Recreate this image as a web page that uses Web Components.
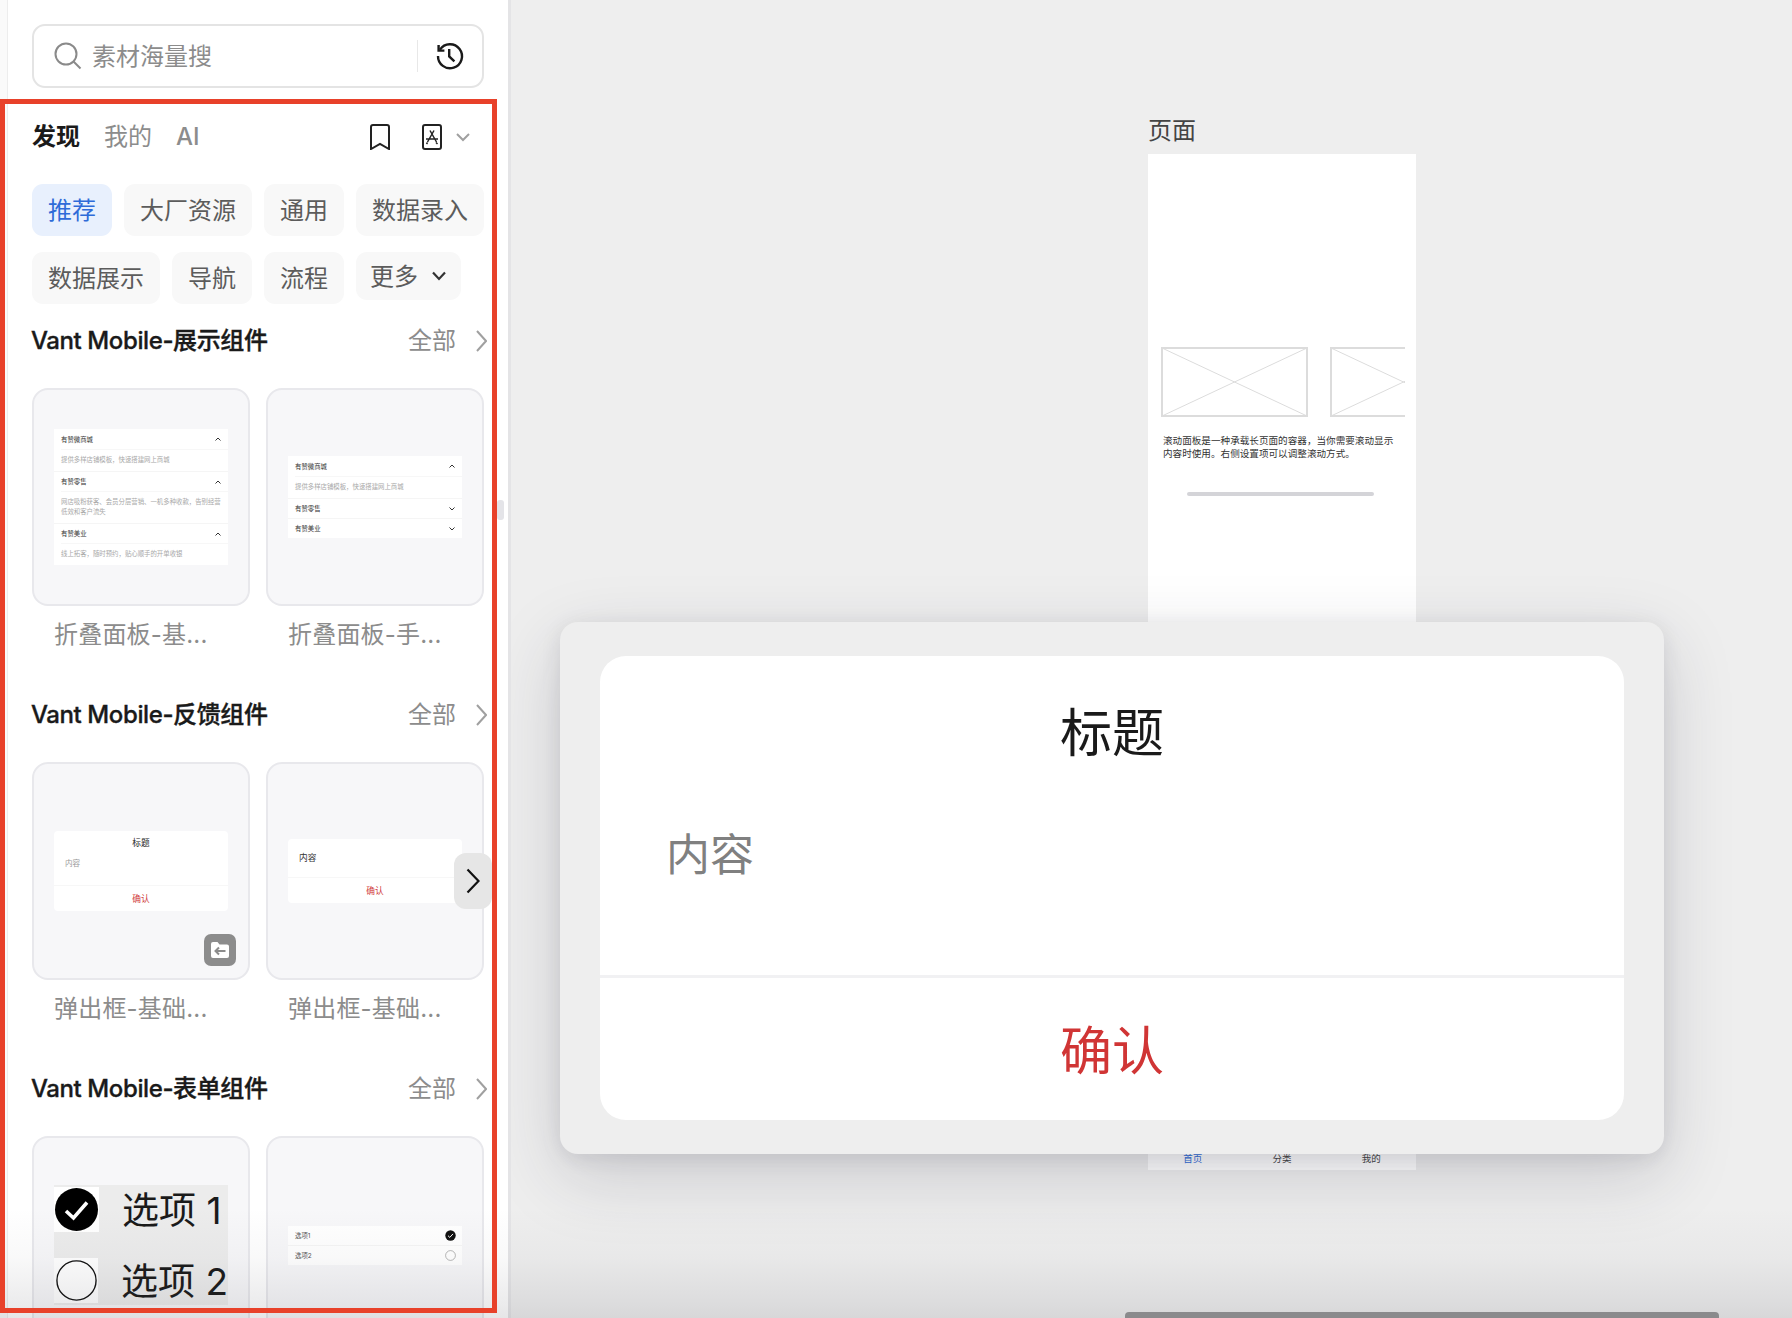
<!doctype html>
<html lang="zh-CN">
<head>
<meta charset="utf-8">
<title>素材</title>
<style>
  html, body {
    height: 1318px;
    margin: 0;
    overflow: hidden;
    width: 1792px;
  }

  body {
    color: #1a1a1a;
    font-family: Inter, 'Noto Sans CJK SC', sans-serif;
  }
</style>
</head>
<body>
<rs-app>
  <rs-sidebar slot="side">
    <rs-chip active>推荐</rs-chip>
    <rs-chip>大厂资源</rs-chip>
    <rs-chip>通用</rs-chip>
    <rs-chip>数据录入</rs-chip>
    <rs-chip>数据展示</rs-chip>
    <rs-chip>导航</rs-chip>
    <rs-chip>流程</rs-chip>
    <rs-chip more>更多</rs-chip>

    <rs-section slot="sections" label="Vant Mobile-展示组件">
      <rs-card caption="折叠面板-基...">
        <rs-collapse open="0,1,2"></rs-collapse>
      </rs-card>
      <rs-card caption="折叠面板-手...">
        <rs-collapse open="0"></rs-collapse>
      </rs-card>
    </rs-section>

    <rs-section slot="sections" label="Vant Mobile-反馈组件">
      <rs-card caption="弹出框-基础..." badge>
        <rs-dialog heading="标题"></rs-dialog>
      </rs-card>
      <rs-card caption="弹出框-基础...">
        <rs-dialog></rs-dialog>
      </rs-card>
      <rs-next slot="over"></rs-next>
    </rs-section>

    <rs-section slot="sections" label="Vant Mobile-表单组件">
      <rs-card caption="">
        <rs-options-big></rs-options-big>
      </rs-card>
      <rs-card caption="">
        <rs-options></rs-options>
      </rs-card>
    </rs-section>
  </rs-sidebar>

  <rs-canvas slot="main">
    <rs-page></rs-page>
    <rs-popup></rs-popup>
  </rs-canvas>
</rs-app>

<script>
class RSElement extends HTMLElement {
  render( html ) {
    const template = document.createElement( 'template' );
    template.innerHTML = html;

    this.attachShadow( {mode: 'open'} );
    this.shadowRoot.appendChild( template.content.cloneNode( true ) );
  }
}

class RSApp extends RSElement {
  constructor() {
    super();

    this.render( /* template */ `
      <style>
        :host {
          display: grid;
          grid-template-columns: 511px 1fr;
          height: 1318px;
          overflow: hidden;
          position: relative;
          width: 1792px;
        }

        div {
          background: linear-gradient( to bottom, rgba( 60, 60, 70, 0 ), rgba( 60, 60, 70, 0.03 ) 45%, rgba( 60, 60, 70, 0.1 ) 88%, rgba( 60, 60, 70, 0.13 ) );
          bottom: 0;
          height: 110px;
          left: 0;
          pointer-events: none;
          position: absolute;
          right: 0;
          z-index: 2;
        }
      </style>
      <slot name="side"></slot>
      <slot name="main"></slot>
      <div></div>
    ` );
  }
}

class RSSidebar extends RSElement {
  constructor() {
    super();

    this.render( /* template */ `
      <style>
        :host {
          background: #fafafa;
          border-right: solid 3px #e4e4e6;
          box-sizing: border-box;
          display: block;
          height: 1318px;
          overflow: hidden;
          padding-left: 7px;
          position: relative;
        }

        .inner {
          background: #ffffff;
          border-left: solid 1px #ededed;
          box-sizing: border-box;
          height: 100%;
          padding: 24px 24px 0 24px;
        }

        .chips {
          display: flex;
          flex-wrap: wrap;
          gap: 16px 12px;
          margin-top: 30px;
        }

        .sections {
          margin-top: 19px;
        }

        .frame {
          border: solid 5px #e8412a;
          box-sizing: border-box;
          height: 1214px;
          left: 0;
          pointer-events: none;
          position: absolute;
          top: 99px;
          width: 497px;
          z-index: 3;
        }

        .handle {
          background: #e4e4e8;
          border-radius: 3px;
          height: 20px;
          left: 497px;
          position: absolute;
          top: 500px;
          width: 7px;
        }
      </style>
      <div class="inner">
        <rs-search></rs-search>
        <rs-tabs></rs-tabs>
        <div class="chips"><slot></slot></div>
        <div class="sections"><slot name="sections"></slot></div>
      </div>
      <div class="handle"></div>
      <div class="frame"></div>
    ` );
  }
}

class RSSearch extends RSElement {
  constructor() {
    super();

    this.render( /* template */ `
      <style>
        :host {
          align-items: center;
          border: solid 2px #e4e4e4;
          border-radius: 13px;
          box-sizing: border-box;
          display: flex;
          height: 64px;
          position: relative;
        }

        svg {
          display: block;
          fill: none;
          flex-shrink: 0;
        }

        .glass {
          margin-left: 20px;
          stroke: #8a8a8a;
          stroke-width: 2;
        }

        p {
          color: #8c8c8c;
          flex-grow: 1;
          font-size: 24px;
          line-height: 34px;
          margin: 2px 0 0 10px;
        }

        i {
          background: #e8e8e8;
          display: block;
          height: 32px;
          width: 1px;
        }

        .history {
          margin: 0 17px 0 17px;
          stroke: #1a1a1a;
          stroke-width: 2.4;
        }
      </style>
      <svg class="glass" width="28" height="28" viewBox="0 0 28 28">
        <circle cx="12" cy="12" r="10.5"></circle>
        <path d="M19.5 19.5 L26.5 26.5"></path>
      </svg>
      <p>素材海量搜</p>
      <i></i>
      <svg class="history" width="30" height="30" viewBox="0 0 30 30">
        <path d="M5 8.6 A12 12 0 1 1 3 15"></path>
        <path d="M3.6 4 V9.6 H9.4"></path>
        <path d="M14.2 8 V15.4 L19.4 20.4"></path>
      </svg>
    ` );
  }
}

class RSTabs extends RSElement {
  constructor() {
    super();

    this.render( /* template */ `
      <style>
        :host {
          align-items: center;
          display: flex;
          font-size: 24px;
          height: 34px;
          margin-top: 32px;
        }

        span {
          color: #8c8c8c;
          line-height: 34px;
          margin-right: 24px;
        }

        span.active {
          color: #1a1a1a;
          font-weight: 700;
        }

        span.latin {
          font-weight: 500;
        }

        svg {
          display: block;
          fill: none;
          stroke: #222222;
          stroke-width: 2;
        }

        .bookmark {
          margin-left: auto;
        }

        .store {
          margin-left: 32px;
        }

        .down {
          margin: 0 14px 0 14px;
          stroke: #a0a0a0;
        }
      </style>
      <span class="active">发现</span>
      <span>我的</span>
      <span class="latin">AI</span>
      <svg class="bookmark" width="20" height="26" viewBox="0 0 20 26">
        <path d="M1 3 a2 2 0 0 1 2 -2 h14 a2 2 0 0 1 2 2 v22 l-9 -5 l-9 5 z"></path>
      </svg>
      <svg class="store" width="20" height="26" viewBox="0 0 20 26">
        <rect x="1" y="1" width="18" height="24" rx="2"></rect>
        <path stroke-width="1.5" d="M8 6.5 L14.5 18 M12 6.5 L5.5 18 M4 15 H16 M14 18.5 L15.5 20 M5.5 18.5 L4.5 20"></path>
      </svg>
      <svg class="down" width="14" height="9" viewBox="0 0 14 9">
        <path d="M1 1 L7 7 L13 1"></path>
      </svg>
    ` );
  }
}

class RSChip extends RSElement {
  constructor() {
    super();

    this.render( /* template */ `
      <style>
        :host {
          align-items: center;
          background: #f8f8f8;
          border-radius: 11px;
          box-sizing: border-box;
          color: #5c5c5c;
          display: inline-flex;
          font-size: 24px;
          height: 52px;
          padding: 0 16px 4px 16px;
        }

        :host( [active] ) {
          background: #e8f0fd;
          color: #2f6bd8;
        }

        :host( [more] ) {
          height: 48px;
          padding: 0 15px 4px 14px;
        }

        svg {
          display: none;
          fill: none;
          margin: 4px 0 0 14px;
          stroke: #333333;
          stroke-width: 2.2;
        }

        :host( [more] ) svg {
          display: block;
        }
      </style>
      <slot></slot>
      <svg width="14" height="10" viewBox="0 0 14 10"><path d="M1 1.5 L7 8 L13 1.5"></path></svg>
    ` );
  }
}

class RSSection extends RSElement {
  constructor() {
    super();

    this.render( /* template */ `
      <style>
        :host {
          display: block;
          height: 374.2px;
          position: relative;
        }

        header {
          align-items: center;
          box-sizing: border-box;
          display: flex;
          height: 34px;
          padding-top: 2px;
          width: 455px;
        }

        h2 {
          color: #1a1a1a;
          font-size: 24px;
          font-weight: 500;
          letter-spacing: -0.4px;
          line-height: 32px;
          margin: 0 0 0 -1px;
          -webkit-text-stroke: 0.35px #1a1a1a;
        }

        span {
          color: #8c8c8c;
          font-size: 24px;
          line-height: 32px;
          margin-left: auto;
        }

        svg {
          display: block;
          fill: none;
          margin-left: 20px;
          stroke: #a0a0a0;
          stroke-width: 2;
        }

        .cards {
          display: grid;
          gap: 16px;
          grid-template-columns: 218px 218px;
          margin-top: 31px;
        }
      </style>
      <header>
        <h2></h2>
        <span>全部</span>
        <svg width="11" height="22" viewBox="0 0 11 22"><path d="M1 1 L10 11 L1 21"></path></svg>
      </header>
      <div class="cards"><slot></slot></div>
      <slot name="over"></slot>
    ` );

    this.shadowRoot.querySelector( 'h2' ).innerText = this.getAttribute( 'label' );
  }
}

class RSCard extends RSElement {
  constructor() {
    super();

    this.render( /* template */ `
      <style>
        :host {
          display: block;
        }

        .thumb {
          align-items: center;
          background: #f7f7f9;
          border: solid 2px #e8e8ec;
          border-radius: 16px;
          box-sizing: border-box;
          display: flex;
          height: 218px;
          padding: 0 20px 0 20px;
          position: relative;
        }

        p {
          color: #8c8c8c;
          font-size: 24px;
          letter-spacing: 0.2px;
          line-height: 34px;
          margin: 12px 0 0 22px;
          white-space: nowrap;
        }

        .badge {
          align-items: center;
          background: #8c8c8c;
          border-radius: 7px;
          bottom: 12px;
          display: none;
          height: 32px;
          justify-content: center;
          position: absolute;
          right: 12px;
          width: 32px;
        }

        :host( [badge] ) .badge {
          display: flex;
        }
      </style>
      <div class="thumb">
        <slot></slot>
        <div class="badge">
          <svg width="20" height="18" viewBox="0 0 20 18">
            <path fill="#ffffff" d="M1 3 a2 2 0 0 1 2 -2 h4.5 l2 2.5 h7.5 a2 2 0 0 1 2 2 v9.5 a2 2 0 0 1 -2 2 h-14 a2 2 0 0 1 -2 -2 z"></path>
            <path fill="none" stroke="#8c8c8c" stroke-width="2" d="M15.5 10 H5.5 M9 6.5 L5.5 10 L9 13.5"></path>
          </svg>
        </div>
      </div>
      <p></p>
    ` );

    this.shadowRoot.querySelector( 'p' ).innerText = this.getAttribute( 'caption' );
  }
}

class RSCollapse extends RSElement {
  constructor() {
    super();

    this.render( /* template */ `
      <style>
        :host {
          background: #ffffff;
          display: block;
          font-size: 6.4px;
          width: 174px;
        }

        .head {
          align-items: center;
          color: #333333;
          display: flex;
          height: 20px;
          justify-content: space-between;
          margin-left: 7px;
          padding-right: 7px;
        }

        .item + .item .head {
          height: 19px;
        }

        .body {
          border-top: solid 1px #f7f7f7;
          box-sizing: border-box;
          color: #a8a8a8;
          line-height: 10px;
          margin-left: 7px;
          padding: 5px 5px 6px 0;
        }

        .item + .item {
          border-top: solid 1px #f5f5f5;
        }

        svg {
          display: block;
          fill: none;
          stroke: #333333;
          stroke-width: 1;
        }
      </style>
    ` );

    const items = [
      ['有赞微商城', '提供多样店铺模板，快速搭建网上商城'],
      ['有赞零售', '网店吸粉获客、会员分层营销、一机多种收款，告别经营低效和客户流失'],
      ['有赞美业', '线上拓客，随时预约，贴心顺手的开单收银']
    ];
    const open = this.getAttribute( 'open' ).split( ',' );

    items.forEach( ( item, index ) => {
      const expanded = open.includes( index.toString() );
      const $item = document.createElement( 'div' );

      $item.className = 'item';
      $item.innerHTML = /* template */ `
        <div class="head">
          <span>${item[0]}</span>
          <svg width="6" height="4" viewBox="0 0 6 4"><path d="${expanded ? 'M0.5 3.5 L3 1 L5.5 3.5' : 'M0.5 0.5 L3 3 L5.5 0.5'}"></path></svg>
        </div>
        ${expanded ? `<div class="body">${item[1]}</div>` : ''}
      `;

      this.shadowRoot.appendChild( $item );
    } );
  }
}

class RSDialog extends RSElement {
  constructor() {
    super();

    this.render( /* template */ `
      <style>
        :host {
          background: #ffffff;
          border-radius: 4px;
          display: block;
          font-size: 8.7px;
          overflow: hidden;
          text-align: center;
          width: 174px;
        }

        h3 {
          color: #222222;
          display: none;
          font-size: 8.7px;
          font-weight: 400;
          line-height: 12px;
          margin: 0;
          padding-top: 6px;
        }

        :host( [heading] ) h3 {
          display: block;
        }

        p {
          color: #333333;
          height: 38px;
          line-height: 38px;
          margin: 0;
          padding-left: 11px;
          text-align: left;
        }

        :host( [heading] ) p {
          box-sizing: border-box;
          color: #999999;
          font-size: 7.6px;
          height: 36px;
          line-height: 18px;
          padding-top: 6px;
        }

        span {
          border-top: solid 1px #f7f7f7;
          color: #d03a3a;
          display: block;
          line-height: 24px;
          padding-top: 1px;
        }
      </style>
      <h3></h3>
      <p>内容</p>
      <span>确认</span>
    ` );

    this.shadowRoot.querySelector( 'h3' ).innerText = this.getAttribute( 'heading' );
  }
}

class RSOptions extends RSElement {
  constructor() {
    super();

    this.render( /* template */ `
      <style>
        :host {
          background: #ffffff;
          color: #555555;
          display: block;
          font-size: 6.4px;
          width: 174px;
        }

        div {
          align-items: center;
          display: flex;
          height: 19px;
          justify-content: space-between;
          padding: 0 6px 0 7px;
        }

        div + div {
          border-top: solid 1px #f5f5f5;
        }

        svg {
          display: block;
        }
      </style>
      <div>
        <span>选项1</span>
        <svg width="11" height="11" viewBox="0 0 11 11">
          <circle cx="5.5" cy="5.5" r="5.2" fill="#111111"></circle>
          <path d="M3 5.7 L4.8 7.4 L8 3.9" fill="none" stroke="#ffffff" stroke-width="1"></path>
        </svg>
      </div>
      <div>
        <span>选项2</span>
        <svg width="11" height="11" viewBox="0 0 11 11">
          <circle cx="5.5" cy="5.5" r="4.9" fill="none" stroke="#888888" stroke-width="0.6"></circle>
        </svg>
      </div>
    ` );
  }
}

class RSOptionsBig extends RSElement {
  constructor() {
    super();

    this.render( /* template */ `
      <style>
        :host {
          background: #ececec;
          box-sizing: border-box;
          color: #1a1a1a;
          display: flex;
          flex-direction: column;
          font-size: 37px;
          height: 120px;
          justify-content: space-between;
          padding: 2px 0 2px 0;
          width: 174px;
        }

        div {
          align-items: center;
          display: flex;
          height: 45px;
        }

        svg {
          background: #ffffff;
          display: block;
          margin-right: 23px;
        }

        span {
          line-height: 45px;
          padding-top: 1px;
          white-space: nowrap;
        }
      </style>
      <div>
        <svg width="45" height="45" viewBox="0 0 45 45">
          <circle cx="22.5" cy="22.5" r="21.5" fill="#000000"></circle>
          <path d="M12 24 L19.5 31 L33 15.5" fill="none" stroke="#ffffff" stroke-width="3.6"></path>
        </svg>
        <span>选项 1</span>
      </div>
      <div>
        <svg width="45" height="45" viewBox="0 0 45 45">
          <circle cx="23" cy="22.5" r="20" fill="none" stroke="#111111" stroke-width="1.4"></circle>
        </svg>
        <span>选项 2</span>
      </div>
    ` );
  }
}

class RSNext extends RSElement {
  constructor() {
    super();

    this.render( /* template */ `
      <style>
        :host {
          align-items: center;
          background: #e6e6e6;
          border-radius: 12px;
          display: flex;
          height: 56px;
          justify-content: center;
          left: 422px;
          position: absolute;
          top: 156px;
          width: 38px;
        }

        svg {
          display: block;
          fill: none;
          stroke: #111111;
          stroke-width: 2.2;
        }
      </style>
      <svg width="14" height="26" viewBox="0 0 14 26"><path d="M1.5 1.5 L12.5 13 L1.5 24.5"></path></svg>
    ` );
  }
}

class RSCanvas extends RSElement {
  constructor() {
    super();

    this.render( /* template */ `
      <style>
        :host {
          background: #eeeeee;
          display: block;
          height: 1318px;
          overflow: hidden;
          position: relative;
        }

        i {
          background: #8a8a8c;
          border-radius: 4px 4px 0 0;
          bottom: 0;
          display: block;
          height: 6px;
          left: 614px;
          position: absolute;
          width: 594px;
          z-index: 3;
        }
      </style>
      <slot></slot>
      <i></i>
    ` );
  }
}

class RSPage extends RSElement {
  constructor() {
    super();

    this.render( /* template */ `
      <style>
        :host {
          display: block;
          left: 637px;
          position: absolute;
          top: 115px;
          width: 268px;
        }

        h4 {
          color: #444444;
          font-size: 24px;
          font-weight: 400;
          line-height: 32px;
          margin: 0 0 7px 0;
        }

        .screen {
          background: #ffffff;
          box-sizing: border-box;
          height: 1016px;
          padding: 193px 0 0 13px;
          position: relative;
        }

        .row {
          display: flex;
          gap: 22px;
          overflow: hidden;
          width: 244px;
        }

        svg {
          display: block;
          flex-shrink: 0;
        }

        rect, line {
          fill: none;
          stroke: #dcdcdc;
        }

        rect {
          stroke-width: 2;
        }

        p {
          color: #333333;
          font-size: 9.6px;
          line-height: 13px;
          margin: 17px 0 0 2px;
          width: 234px;
        }

        .track {
          background: #d4d4d8;
          border-radius: 2px;
          height: 4px;
          margin: 32px 0 0 26px;
          width: 187px;
        }

        nav {
          align-items: center;
          bottom: 0;
          display: grid;
          font-size: 9.5px;
          grid-template-columns: 1fr 1fr 1fr;
          height: 24px;
          left: 0;
          position: absolute;
          right: 0;
          text-align: center;
        }

        nav span {
          color: #444444;
        }

        nav span:first-child {
          color: #2f6bd8;
        }
      </style>
      <h4>页面</h4>
      <div class="screen">
        <div class="row">
          <svg width="147" height="70" viewBox="0 0 147 70">
            <rect x="1" y="1" width="145" height="68"></rect>
            <line x1="1" y1="1" x2="146" y2="69"></line>
            <line x1="146" y1="1" x2="1" y2="69"></line>
          </svg>
          <svg width="147" height="70" viewBox="0 0 147 70">
            <rect x="1" y="1" width="145" height="68"></rect>
            <line x1="1" y1="1" x2="146" y2="69"></line>
            <line x1="146" y1="1" x2="1" y2="69"></line>
          </svg>
        </div>
        <p>滚动面板是一种承载长页面的容器，当你需要滚动显示内容时使用。右侧设置项可以调整滚动方式。</p>
        <div class="track"></div>
        <nav>
          <span>首页</span>
          <span>分类</span>
          <span>我的</span>
        </nav>
      </div>
    ` );
  }
}

class RSPopup extends RSElement {
  constructor() {
    super();

    this.render( /* template */ `
      <style>
        :host {
          background: #eeeeee;
          border-radius: 18px;
          box-shadow: 0 22px 70px rgba( 40, 40, 60, 0.18 ), 0 4px 20px rgba( 40, 40, 60, 0.1 );
          box-sizing: border-box;
          display: block;
          height: 532px;
          left: 49px;
          padding: 34px 40px 0 40px;
          position: absolute;
          top: 622px;
          width: 1104px;
        }

        .card {
          background: #ffffff;
          border-radius: 26px;
          height: 464px;
          overflow: hidden;
          text-align: center;
        }

        h3 {
          color: #1a1a1a;
          font-size: 52px;
          font-weight: 400;
          line-height: 70px;
          margin: 0;
          padding-top: 43px;
        }

        p {
          box-sizing: border-box;
          color: #808080;
          font-size: 44px;
          height: 206px;
          line-height: 60px;
          margin: 0;
          padding: 56px 0 0 66px;
          text-align: left;
        }

        span {
          border-top: solid 3px #f1f1f3;
          color: #d03535;
          display: block;
          font-size: 52px;
          line-height: 70px;
          padding-top: 39px;
        }
      </style>
      <div class="card">
        <h3>标题</h3>
        <p>内容</p>
        <span>确认</span>
      </div>
    ` );
  }
}

window.customElements.define( 'rs-app', RSApp );
window.customElements.define( 'rs-sidebar', RSSidebar );
window.customElements.define( 'rs-search', RSSearch );
window.customElements.define( 'rs-tabs', RSTabs );
window.customElements.define( 'rs-chip', RSChip );
window.customElements.define( 'rs-section', RSSection );
window.customElements.define( 'rs-card', RSCard );
window.customElements.define( 'rs-collapse', RSCollapse );
window.customElements.define( 'rs-dialog', RSDialog );
window.customElements.define( 'rs-options', RSOptions );
window.customElements.define( 'rs-options-big', RSOptionsBig );
window.customElements.define( 'rs-next', RSNext );
window.customElements.define( 'rs-canvas', RSCanvas );
window.customElements.define( 'rs-page', RSPage );
window.customElements.define( 'rs-popup', RSPopup );
</script>
</body>
</html>
